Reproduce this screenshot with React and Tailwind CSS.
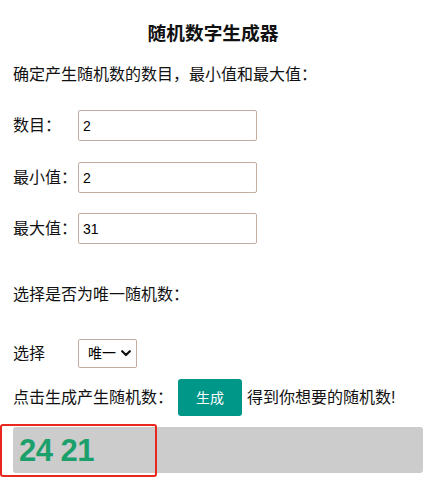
import React, { useState } from 'react';

const cjk = { fontFamily: '"Liberation Sans", "Noto Sans CJK SC", sans-serif' };

function Field({ label, value, onChange, className = '' }) {
  return (
    <div className={`flex items-center h-[31px] ${className}`}>
      <span className="w-[65px] text-[16px] leading-[24px] text-[#111]">{label}</span>
      <input
        type="text"
        value={value}
        onChange={(e) => onChange(e.target.value)}
        className="w-[179px] h-[31px] border border-[#c3ada0] rounded-[2px] px-[4px] text-[14px] text-black bg-white outline-none"
      />
    </div>
  );
}

export default function App() {
  const [count, setCount] = useState('2');
  const [min, setMin] = useState('2');
  const [max, setMax] = useState('31');
  const [unique, setUnique] = useState('unique');
  const [result, setResult] = useState('24 21');

  const generate = () => {
    const n = parseInt(count) || 0;
    const lo = parseInt(min) || 0;
    const hi = parseInt(max) || 0;
    const out = [];
    let tries = 0;
    while (out.length < n && tries < 1000) {
      tries++;
      const r = Math.floor(Math.random() * (hi - lo + 1)) + lo;
      if (unique === 'unique' && out.includes(r)) continue;
      out.push(r);
    }
    setResult(out.join(' '));
  };

  return (
    <div className="w-[426px] h-[493px] bg-white overflow-hidden" style={cjk}>
      <h3 className="mt-[22px] h-[24px] leading-[24px] text-center text-[18.7px] font-bold text-[#111]">随机数字生成器</h3>
      <div className="pl-[13px]">
        <p className="mt-[17px] text-[16px] leading-[24px] text-[#111]">确定产生随机数的数目，最小值和最大值：</p>
        <Field label="数目：" value={count} onChange={setCount} className="mt-[23px]" />
        <Field label="最小值：" value={min} onChange={setMin} className="mt-[21px]" />
        <Field label="最大值：" value={max} onChange={setMax} className="mt-[20px]" />
        <p className="mt-[39px] text-[16px] leading-[24px] text-[#111]">选择是否为唯一随机数：</p>
        <div className="mt-[32px] flex items-center h-[29px]">
          <span className="w-[65px] text-[16px] leading-[24px] text-[#111]">选择</span>
          <div className="relative w-[59px] h-[29px]">
            <select
              value={unique}
              onChange={(e) => setUnique(e.target.value)}
              className="appearance-none w-full h-full border border-[#c3ada0] rounded-[2px] pl-[9px] text-[14px] text-black bg-white outline-none"
            >
              <option value="unique">唯一</option>
              <option value="repeat">重复</option>
            </select>
            <svg className="absolute right-[6px] top-[11px] pointer-events-none" width="10" height="7" viewBox="0 0 10 7">
              <path d="M1.2 1.2 L5 5 L8.8 1.2" fill="none" stroke="#111" strokeWidth="2.2" strokeLinecap="round" strokeLinejoin="round" />
            </svg>
          </div>
        </div>
        <div className="mt-[11px] flex items-center h-[37px] text-[16px] leading-[24px] text-[#111]">
          <span>点击生成产生随机数：</span>
          <button
            onClick={generate}
            className="ml-[5px] w-[64px] h-[37px] rounded-[3px] bg-[#009688] text-white text-[14px]"
          >
            生成
          </button>
          <span className="ml-[5px]">得到你想要的随机数!</span>
        </div>
        <div className="relative mt-[11px] mr-[3px] h-[46px] rounded-[3px] bg-[#cccccc] flex items-center pl-[6px]">
          <span className="text-[31px] font-bold text-[#1ba06b] leading-none tracking-[-0.5px]">{result}</span>
          <div className="absolute left-[-13px] top-[-3px] w-[157px] h-[53px] border-2 border-[#e8271e] rounded-[3px] pointer-events-none" />
        </div>
      </div>
    </div>
  );
}
